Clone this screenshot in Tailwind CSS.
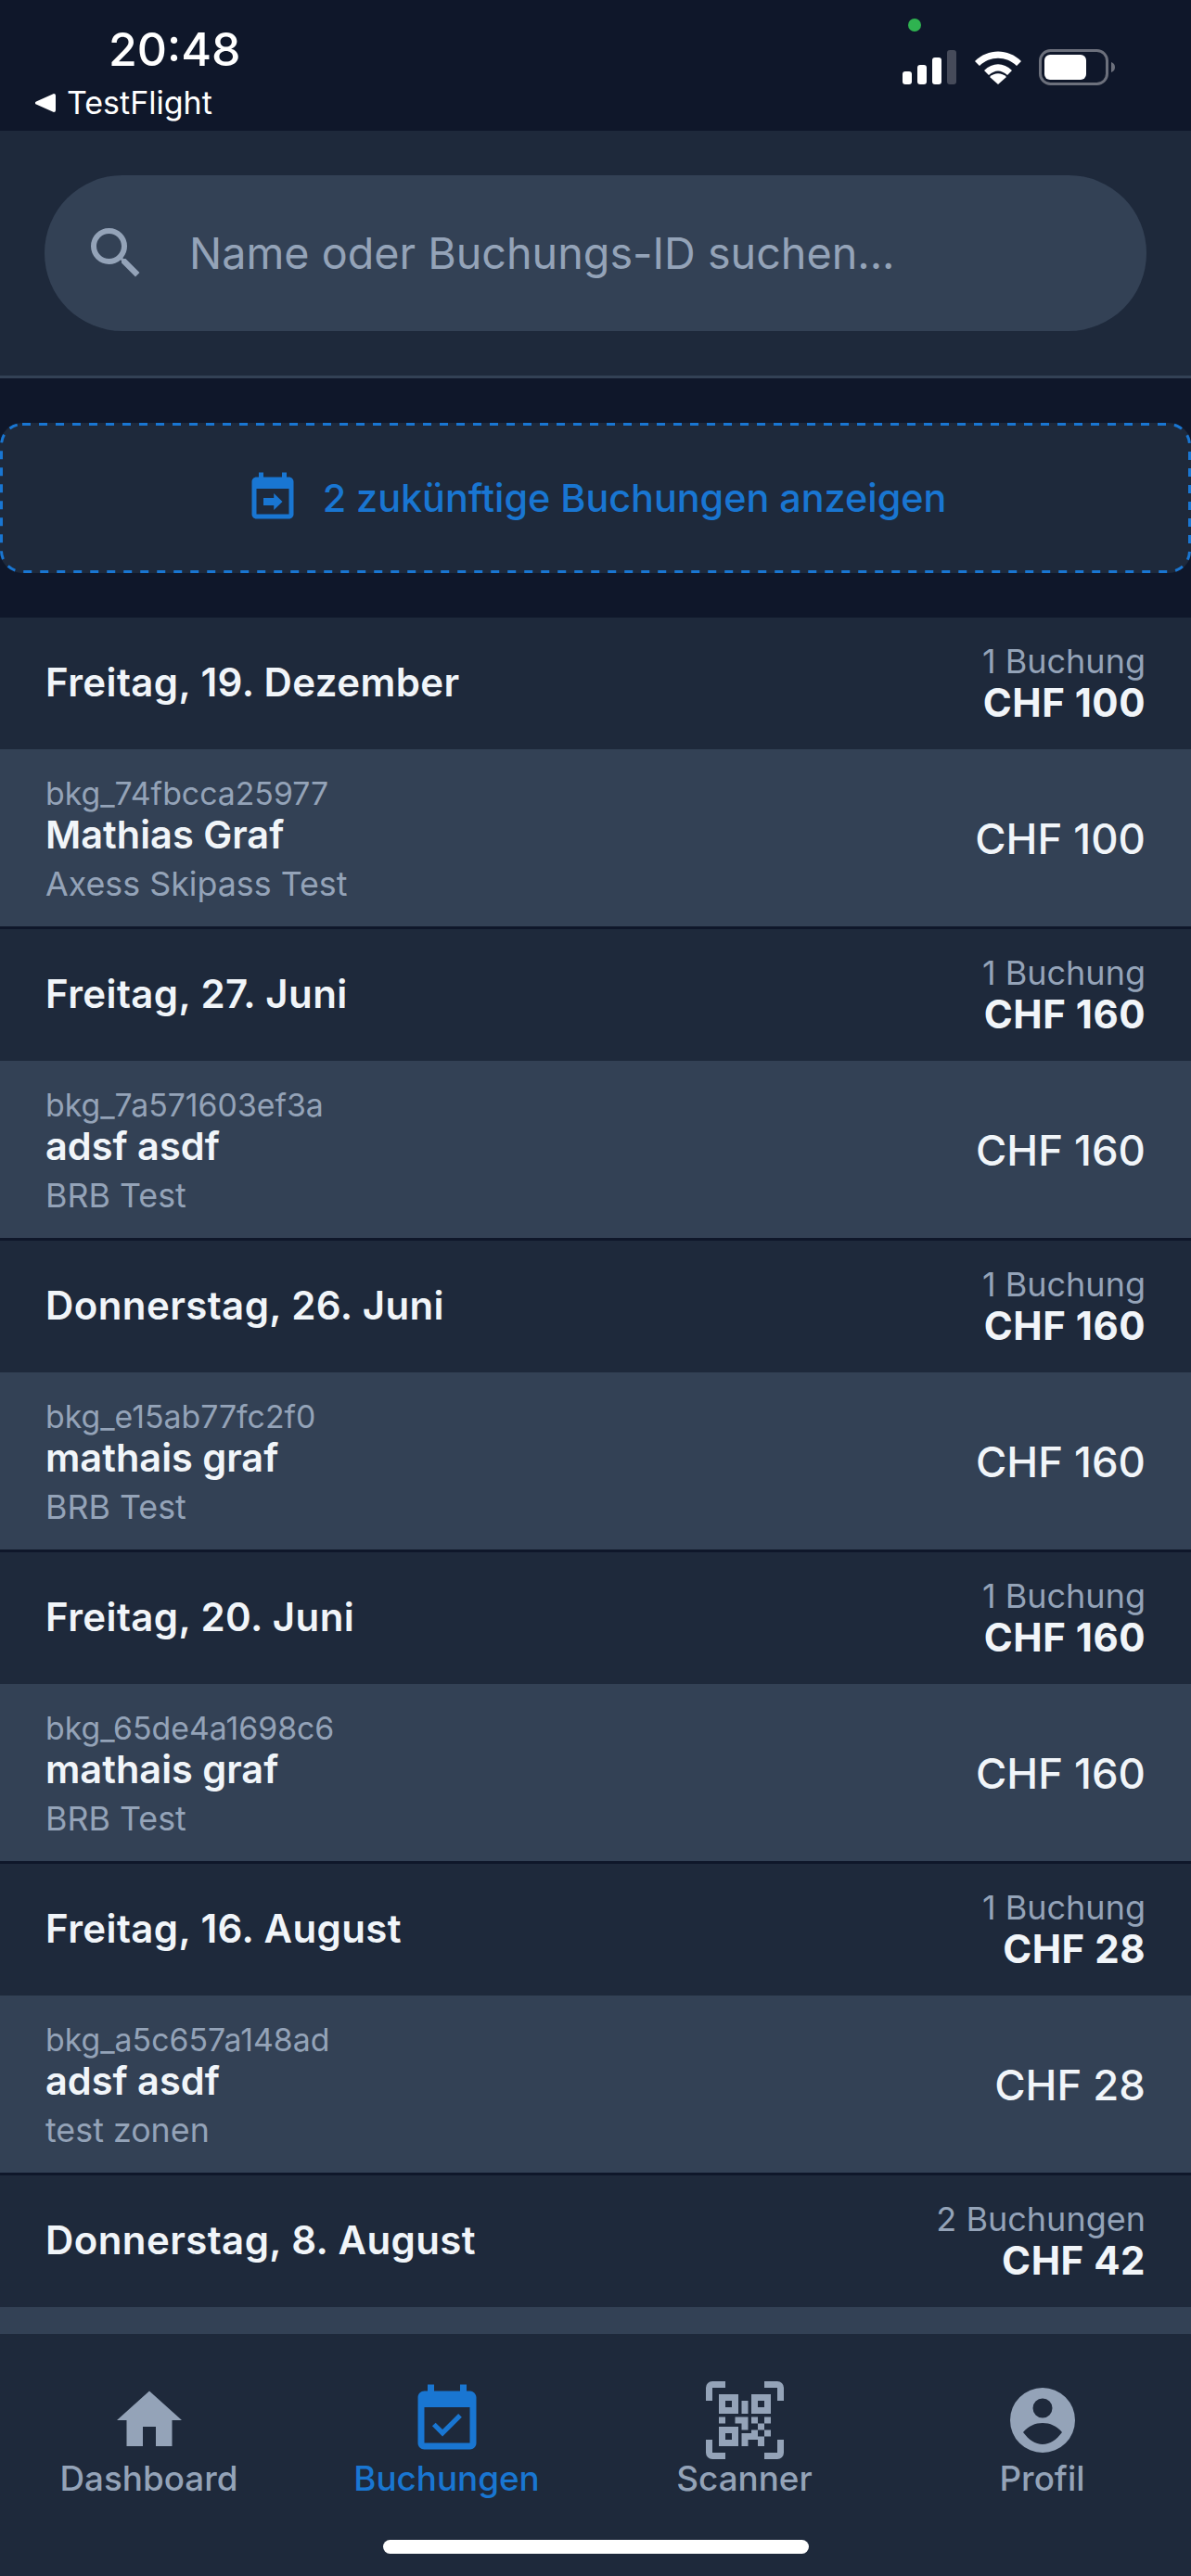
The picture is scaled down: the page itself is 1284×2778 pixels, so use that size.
<!DOCTYPE html>
<html lang="de">
<head>
  <meta charset="UTF-8">
  <title>Buchungen</title>
  <meta name="viewport" content="width=device-width, initial-scale=1.0">
  <script src="https://cdn.jsdelivr.net/npm/@tailwindcss/browser@4"></script>
</head>
<body class="bg-[#0f172a] font-['Inter',sans-serif] text-[#f1f5f9] overflow-hidden">
  <div class="w-[1284px] h-[2778px] flex flex-col overflow-hidden">
    <!-- status bar -->
    <div class="h-[141px] shrink-0 relative bg-[#0f172a] text-white">
      <div class="absolute left-[117px] top-[26px] text-[50px] leading-[54px] font-medium">20:48</div>
      <div class="absolute left-[38px] top-[92px] flex items-center gap-[12px]">
        <svg width="22" height="20" viewBox="0 0 22 20" fill="#fff"><path d="M20 0a2 2 0 0 1 2 2v16a2 2 0 0 1-2 2L1 11.5a1.6 1.6 0 0 1 0-3z"/></svg>
        <span class="text-[34px] leading-[38px]">TestFlight</span>
      </div>
      <div class="absolute left-[979px] top-[20px] w-[14px] h-[14px] rounded-full bg-[#2fb350]"></div>
      <svg class="absolute left-[970px] top-[50px]" width="62" height="44" viewBox="0 0 62 44">
        <rect x="3" y="27" width="10" height="14" rx="3" fill="#fff"/>
        <rect x="19" y="20" width="10" height="21" rx="3" fill="#fff"/>
        <rect x="35" y="12" width="10" height="29" rx="3" fill="#fff"/>
        <rect x="51" y="4" width="10" height="37" rx="3" fill="#464b5a"/>
      </svg>
      <svg class="absolute left-[1050px] top-[52px]" width="52" height="40" viewBox="0 0 52 40" fill="#fff">
        <path d="M1 14 C15 0 37 0 51 14 L46 19 C35 8 17 8 6 19z"/>
        <path d="M11 24 C20 15 32 15 41 24 L36 29 C29 23 23 23 16 29z"/>
        <path d="M26 39 L17 31 C22 26 30 26 35 31z"/>
      </svg>
      <svg class="absolute left-[1120px] top-[53px]" width="84" height="40" viewBox="0 0 84 40">
        <rect x="1.5" y="1.5" width="72" height="36" rx="11" fill="none" stroke="#6c707c" stroke-width="3"/>
        <rect x="6" y="6" width="45" height="27" rx="6" fill="#fff"/>
        <path d="M78 14 C81 15 82 17 82 19.5 C82 22 81 24 78 25z" fill="#6c707c"/>
      </svg>
    </div>

    <!-- search -->
    <div class="h-[267px] shrink-0 bg-[#1e293b] border-b-[3px] border-[#334155] px-[48px] pt-[48px]">
      <div class="h-[168px] rounded-[84px] bg-[#334155] flex items-center pl-[41px]">
        <svg width="72" height="72" viewBox="0 0 24 24" fill="#94a3b8"><path d="M15.5 14h-.79l-.28-.27A6.47 6.47 0 0 0 16 9.5 6.5 6.5 0 1 0 9.5 16c1.61 0 3.09-.59 4.23-1.57l.27.28v.79l5 4.99L20.49 19l-4.99-5zm-6 0C7.01 14 5 11.99 5 9.5S7.01 5 9.5 5 14 7.01 14 9.5 11.99 14 9.5 14z"/></svg>
        <span class="ml-[43px] text-[46.7px] leading-[56px] text-[#94a3b8]">Name oder Buchungs-ID suchen...</span>
      </div>
    </div>

    <!-- future bookings button -->
    <div class="h-[258px] shrink-0 pt-[48px]">
      <div class="relative h-[162px] rounded-[24px] bg-[#1e293b] flex items-center justify-center gap-[24px]">
        <svg class="absolute inset-0" width="1284" height="162" viewBox="0 0 1284 162" fill="none"><rect x="1.5" y="1.5" width="1281" height="159" rx="22.5" stroke="#1976d2" stroke-width="3" stroke-dasharray="9 9"/></svg>
        <svg width="60" height="60" viewBox="0 0 24 24" fill="#1976d2"><path d="M19 3h-1V1h-2v2H8V1H6v2H5c-1.1 0-2 .9-2 2v14c0 1.1.9 2 2 2h14c1.1 0 2-.9 2-2V5c0-1.1-.9-2-2-2zm0 16H5V8h14v11z"/><path d="M8 12h4.500v-2l3.700 3.600-3.700 3.600v-2H8z"/></svg>
        <span class="text-[41.3px] leading-[48px] font-medium text-[#1976d2]">2 zukünftige Buchungen anzeigen</span>
      </div>
    </div>

    <!-- list -->
    <div class="flex-1 overflow-hidden">
      <div class="h-[142px] bg-[#1e293b] flex items-center justify-between px-[49px]">
        <span class="mb-[2px] text-[42px] tracking-[0.4px] leading-[48px] font-semibold">Freitag, 19. Dezember</span>
        <div class="text-right">
          <div class="text-[36px] leading-[42px] text-[#94a3b8]">1 Buchung</div>
          <div class="text-[42px] tracking-[0.5px] leading-[48px] font-bold">CHF 100</div>
        </div>
      </div>
      <div class="h-[194px] bg-[#334155] border-b-[3px] border-[#0f172a] flex items-center justify-between px-[49px]">
        <div class="mt-[5px]">
          <div class="text-[33.800px] leading-[38px] text-[#94a3b8]">bkg_74fbcca25977</div>
          <div class="text-[41.500px] leading-[50px] font-semibold">Mathias Graf</div>
          <div class="mt-[5px] text-[35.800px] leading-[46px] text-[#94a3b8]">Axess Skipass Test</div>
        </div>
        <span class="mt-[3px] text-[45.500px] leading-[54px] font-[550]">CHF 100</span>
      </div>

      <div class="h-[142px] bg-[#1e293b] flex items-center justify-between px-[49px]">
        <span class="mb-[2px] text-[42px] tracking-[0.4px] leading-[48px] font-semibold">Freitag, 27. Juni</span>
        <div class="text-right">
          <div class="text-[36px] leading-[42px] text-[#94a3b8]">1 Buchung</div>
          <div class="text-[42px] tracking-[0.5px] leading-[48px] font-bold">CHF 160</div>
        </div>
      </div>
      <div class="h-[194px] bg-[#334155] border-b-[3px] border-[#0f172a] flex items-center justify-between px-[49px]">
        <div class="mt-[5px]">
          <div class="text-[33.800px] leading-[38px] text-[#94a3b8]">bkg_7a571603ef3a</div>
          <div class="text-[41.500px] leading-[50px] font-semibold">adsf asdf</div>
          <div class="mt-[5px] text-[35.800px] leading-[46px] text-[#94a3b8]">BRB Test</div>
        </div>
        <span class="mt-[3px] text-[45.500px] leading-[54px] font-[550]">CHF 160</span>
      </div>

      <div class="h-[142px] bg-[#1e293b] flex items-center justify-between px-[49px]">
        <span class="mb-[2px] text-[42px] tracking-[0.4px] leading-[48px] font-semibold">Donnerstag, 26. Juni</span>
        <div class="text-right">
          <div class="text-[36px] leading-[42px] text-[#94a3b8]">1 Buchung</div>
          <div class="text-[42px] tracking-[0.5px] leading-[48px] font-bold">CHF 160</div>
        </div>
      </div>
      <div class="h-[194px] bg-[#334155] border-b-[3px] border-[#0f172a] flex items-center justify-between px-[49px]">
        <div class="mt-[5px]">
          <div class="text-[33.800px] leading-[38px] text-[#94a3b8]">bkg_e15ab77fc2f0</div>
          <div class="text-[41.500px] leading-[50px] font-semibold">mathais graf</div>
          <div class="mt-[5px] text-[35.800px] leading-[46px] text-[#94a3b8]">BRB Test</div>
        </div>
        <span class="mt-[3px] text-[45.500px] leading-[54px] font-[550]">CHF 160</span>
      </div>

      <div class="h-[142px] bg-[#1e293b] flex items-center justify-between px-[49px]">
        <span class="mb-[2px] text-[42px] tracking-[0.4px] leading-[48px] font-semibold">Freitag, 20. Juni</span>
        <div class="text-right">
          <div class="text-[36px] leading-[42px] text-[#94a3b8]">1 Buchung</div>
          <div class="text-[42px] tracking-[0.5px] leading-[48px] font-bold">CHF 160</div>
        </div>
      </div>
      <div class="h-[194px] bg-[#334155] border-b-[3px] border-[#0f172a] flex items-center justify-between px-[49px]">
        <div class="mt-[5px]">
          <div class="text-[33.800px] leading-[38px] text-[#94a3b8]">bkg_65de4a1698c6</div>
          <div class="text-[41.500px] leading-[50px] font-semibold">mathais graf</div>
          <div class="mt-[5px] text-[35.800px] leading-[46px] text-[#94a3b8]">BRB Test</div>
        </div>
        <span class="mt-[3px] text-[45.500px] leading-[54px] font-[550]">CHF 160</span>
      </div>

      <div class="h-[142px] bg-[#1e293b] flex items-center justify-between px-[49px]">
        <span class="mb-[2px] text-[42px] tracking-[0.4px] leading-[48px] font-semibold">Freitag, 16. August</span>
        <div class="text-right">
          <div class="text-[36px] leading-[42px] text-[#94a3b8]">1 Buchung</div>
          <div class="text-[42px] tracking-[0.5px] leading-[48px] font-bold">CHF 28</div>
        </div>
      </div>
      <div class="h-[194px] bg-[#334155] border-b-[3px] border-[#0f172a] flex items-center justify-between px-[49px]">
        <div class="mt-[5px]">
          <div class="text-[33.800px] leading-[38px] text-[#94a3b8]">bkg_a5c657a148ad</div>
          <div class="text-[41.500px] leading-[50px] font-semibold">adsf asdf</div>
          <div class="mt-[5px] text-[35.800px] leading-[46px] text-[#94a3b8]">test zonen</div>
        </div>
        <span class="mt-[3px] text-[45.500px] leading-[54px] font-[550]">CHF 28</span>
      </div>

      <div class="h-[142px] bg-[#1e293b] flex items-center justify-between px-[49px]">
        <span class="mb-[2px] text-[42px] tracking-[0.4px] leading-[48px] font-semibold">Donnerstag, 8. August</span>
        <div class="text-right">
          <div class="text-[36px] leading-[42px] text-[#94a3b8]">2 Buchungen</div>
          <div class="text-[42px] tracking-[0.5px] leading-[48px] font-bold">CHF 42</div>
        </div>
      </div>
      <div class="h-[40px] bg-[#334155]"></div>
    </div>

    <!-- tab bar -->
    <div class="h-[261px] shrink-0 bg-[#1e293b] relative grid grid-cols-4">
      <div class="flex flex-col items-center pt-[51px] text-[#94a3b8]">
        <svg width="84" height="84" viewBox="0 0 24 24" fill="currentColor"><path d="M10 20v-6h4v6h5v-8h3L12 3 2 12h3v8z"/></svg>
        <span class="text-[36.800px] leading-[42px] font-medium">Dashboard</span>
      </div>
      <div class="flex flex-col items-center pt-[51px] text-[#1976d2]">
        <svg width="84" height="84" viewBox="0 0 24 24" fill="currentColor"><path d="M16.53 11.06 15.47 10l-4.88 4.88-2.12-2.12-1.06 1.06L10.59 17l5.94-5.94zM19 3h-1V1h-2v2H8V1H6v2H5c-1.11 0-1.99.9-1.99 2L3 19c0 1.1.89 2 2 2h14c1.1 0 2-.9 2-2V5c0-1.1-.9-2-2-2zm0 16H5V8h14v11z"/></svg>
        <span class="text-[36.800px] leading-[42px] font-medium">Buchungen</span>
      </div>
      <div class="flex flex-col items-center pt-[51px] text-[#94a3b8]">
        <svg width="84" height="84" viewBox="0 0 84 84" fill="currentColor">
          <path d="M0 21V7a7 7 0 0 1 7-7h14v7H7v14zM63 0h14a7 7 0 0 1 7 7v14h-7V7H63zM0 63h7v14h14v7H7a7 7 0 0 1-7-7zM77 63h7v14a7 7 0 0 1-7 7H63v-7h14z"/>
          <path fill-rule="evenodd" d="M14 14h21v21H14zM21 21v7h7v-7zM49 14h21v21H49zM56 21v7h7v-7zM14 49h21v21H14zM21 56v7h7v-7z"/>
          <path d="M38.5 21h7v14h-7zM14 38.5h7v7h-7zM31.500 38.500h14v14h-7v-7h-7zM49 38.500h7v7h-7zM63 38.500h7v7h-7zM56 45.500h7v7h-7zM49 52.500h7v7h-7zM63 52.500h7v7h-7zM38.500 56h17.500v7H45.500v7h-7zM56 59.500h7v3.500h-7zM56 63h7v7h-7z"/>
        </svg>
        <span class="text-[36.800px] leading-[42px] font-medium">Scanner</span>
      </div>
      <div class="flex flex-col items-center pt-[51px] text-[#94a3b8]">
        <svg width="84" height="84" viewBox="0 0 84 84" fill="currentColor"><path fill-rule="evenodd" d="M42 7a35 35 0 1 0 0 70 35 35 0 0 0 0-70zM42 18.500a10.500 10.500 0 1 1 0 21 10.500 10.500 0 0 1 0-21zM21 55C27 48 34 45 42 45C50 45 57 48 63 55C57 63 50 68 42 68C34 68 27 63 21 55z"/></svg>
        <span class="text-[36.800px] leading-[42px] font-medium">Profil</span>
      </div>
      <div class="absolute left-[413px] top-[222px] w-[459px] h-[15px] rounded-full bg-white"></div>
    </div>
  </div>
</body>
</html>
